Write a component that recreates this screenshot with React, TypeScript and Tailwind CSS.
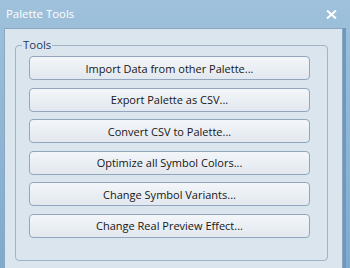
// Palette Tools dialog

const tools = [
  'Import Data from other Palette...',
  'Export Palette as CSV...',
  'Convert CSV to Palette...',
  'Optimize all Symbol Colors...',
  'Change Symbol Variants...',
  'Change Real Preview Effect...',
];

function CloseIcon() {
  return (
    <svg width="11" height="9" viewBox="0 0 11 9" className="block">
      <path d="M1 0.5 L10 8.5 M10 0.5 L1 8.5" stroke="#ffffff" strokeWidth="2" />
    </svg>
  );
}

export default function App() {
  return (
    <div
      className="w-[350px] h-[268px] flex flex-col bg-gradient-to-b from-[#9fc1db] to-[#7faacc] overflow-hidden"
      style={{ fontFamily: '"Open Sans", "Noto Sans", sans-serif' }}
    >
      {/* Title bar */}
      <div className="h-[28px] flex items-center justify-between pl-[6px] pr-[13px] shrink-0">
        <span className="text-white text-[11.4px] leading-none pb-[1px]">Palette Tools</span>
        <CloseIcon />
      </div>

      {/* Client area */}
      <div className="flex-1 flex pl-[4px] pr-[4px]">
        <div className="flex-1 flex border-l border-t border-r border-[#8aa6c0] bg-[#dbe5ee]">
          <div className="flex-1 pl-[10px] pr-[14px] pt-[16px]">
            <div className="relative h-[216px] rounded-[4px] border border-[#9fb2c6] pl-[13px] pr-[17px] pt-[10px]">
              <span className="absolute left-[6px] top-[-8px] bg-[#dbe5ee] px-px text-[11.4px] leading-[14px] text-[#1f3b5c]">
                Tools
              </span>
              <div className="flex flex-col gap-[7.6px]">
                {tools.map((t) => (
                  <button
                    key={t}
                    className="h-[24px] w-full rounded-[4px] border border-[#93a6be] bg-gradient-to-b from-[#f3f6f9] to-[#e2e8ef] text-[11px] text-[#161616] leading-none flex items-center justify-center"
                  >
                    {t}
                  </button>
                ))}
              </div>
            </div>
          </div>
        </div>
        <div className="w-[3px] bg-[#6d98bf]" />
      </div>
    </div>
  );
}
